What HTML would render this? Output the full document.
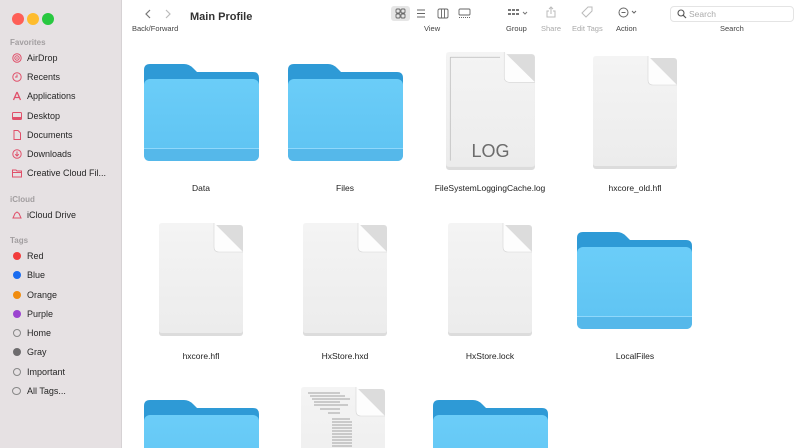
<!DOCTYPE html>
<html style="width:800px;height:448px;overflow:hidden"><head><meta charset="utf-8"><style>
*{margin:0;padding:0;box-sizing:border-box}
body{width:800px;height:448px;overflow:hidden;background:#fff;font-family:"Liberation Sans",sans-serif;position:relative}
#side{position:absolute;left:0;top:0;width:122px;height:448px;background:#e6e1e3;border-right:1px solid #d6d2d4}
.dot{position:absolute;top:13px;width:12px;height:12px;border-radius:50%}
.sh{position:absolute;left:10px;font-size:8px;color:#a29ea0;font-weight:bold}
.si{position:absolute;left:27px;font-size:9px;color:#262626}
.ic{position:absolute;left:12px;width:10px;height:10px}
.tg{position:absolute;left:13px;width:8px;height:8px;border-radius:50%}
.a{position:absolute}
.lbl{position:absolute;font-size:8.5px;color:#222;text-align:center;width:160px}
.tb{position:absolute;font-size:7.5px;color:#444;text-align:center}
</style></head><body>
<div id="side">
<div class="dot" style="left:12px;background:#fe5f57"></div>
<div class="dot" style="left:27px;background:#febc2e"></div>
<div class="dot" style="left:42px;background:#28c840"></div>
<div class="sh" style="top:38px">Favorites</div>
<svg class="ic" style="top:53px" viewBox="0 0 10 10"><circle cx="5" cy="5" r="4.2" fill="none" stroke="#e0506a" stroke-width="1"/><circle cx="5" cy="5" r="2.2" fill="none" stroke="#e0506a" stroke-width="1"/><circle cx="5" cy="5" r=".8" fill="#e0506a"/></svg><div class="si" style="top:53px">AirDrop</div>
<svg class="ic" style="top:72px" viewBox="0 0 10 10"><circle cx="5" cy="5" r="4.2" fill="none" stroke="#e0506a"/><path d="M5 2.5V5H3" fill="none" stroke="#e0506a"/></svg><div class="si" style="top:72px">Recents</div>
<svg class="ic" style="top:91px" viewBox="0 0 10 10"><path d="M5 1L1.5 9M5 1L8.5 9M2 6.5H8" fill="none" stroke="#e0506a" stroke-width="1.3"/></svg><div class="si" style="top:91px">Applications</div>
<svg class="ic" style="top:111px" viewBox="0 0 10 10"><rect x=".5" y="1.5" width="9" height="7" rx="1" fill="none" stroke="#e0506a"/><rect x="1" y="6" width="8" height="2" fill="#e0506a"/></svg><div class="si" style="top:111px">Desktop</div>
<svg class="ic" style="top:130px" viewBox="0 0 10 10"><path d="M2 .5H6L8.5 3V9.5H2Z" fill="none" stroke="#e0506a"/></svg><div class="si" style="top:130px">Documents</div>
<svg class="ic" style="top:149px" viewBox="0 0 10 10"><circle cx="5" cy="5" r="4.2" fill="none" stroke="#e0506a"/><path d="M5 2.5V7M3.2 5.3L5 7L6.8 5.3" fill="none" stroke="#e0506a"/></svg><div class="si" style="top:149px">Downloads</div>
<svg class="ic" style="top:168px" viewBox="0 0 10 10"><path d="M.5 2H4L5 3H9.5V9H.5Z M.5 4.5H9.5" fill="none" stroke="#e0506a"/></svg><div class="si" style="top:168px">Creative Cloud Fil...</div>
<div class="sh" style="top:195px">iCloud</div>
<svg class="ic" style="top:210px" viewBox="0 0 10 10"><path d="M1 8H9L7 3.5L5 2L3 3.5Z" fill="none" stroke="#e0506a"/></svg><div class="si" style="top:210px">iCloud Drive</div>
<div class="sh" style="top:236px">Tags</div>
<div class="tg" style="top:252px;background:#f23c3c"></div><div class="si" style="top:251px">Red</div>
<div class="tg" style="top:271px;background:#1a6cf0"></div><div class="si" style="top:270px">Blue</div>
<div class="tg" style="top:291px;background:#f08c10"></div><div class="si" style="top:290px">Orange</div>
<div class="tg" style="top:310px;background:#9c44d0"></div><div class="si" style="top:309px">Purple</div>
<div class="tg" style="top:329px;border:1px solid #888"></div><div class="si" style="top:328px">Home</div>
<div class="tg" style="top:348px;background:#6e6c6e"></div><div class="si" style="top:347px">Gray</div>
<div class="tg" style="top:368px;border:1px solid #888"></div><div class="si" style="top:367px">Important</div>
<div class="tg" style="top:387px;border:1px solid #888;width:9px;left:12px"></div><div class="si" style="top:386px">All Tags...</div>
</div>
<svg class="a" style="left:144px;top:9px" width="30" height="10" viewBox="0 0 30 10"><path d="M6 1L2 5L6 9" fill="none" stroke="#777" stroke-width="1.2"/><path d="M22 1L26 5L22 9" fill="none" stroke="#bbb" stroke-width="1.2"/></svg>
<div class="tb" style="left:132px;top:24px">Back/Forward</div>
<div class="a" style="left:190px;top:11px;font-size:11px;font-weight:bold;color:#333">Main Profile</div>
<div class="a" style="left:391px;top:6px;width:19px;height:15px;background:#e6e6e6;border-radius:3px"></div>
<svg class="a" style="left:395px;top:8px" width="90" height="11" viewBox="0 0 90 11"><g fill="none" stroke="#666" stroke-width=".9"><rect x="1" y="1" width="4" height="4" rx="1"/><rect x="6" y="1" width="4" height="4" rx="1"/><rect x="1" y="6" width="4" height="4" rx="1"/><rect x="6" y="6" width="4" height="4" rx="1"/><path d="M22 2H30M22 5.5H30M22 9H30"/><rect x="43" y="1" width="10" height="9" rx="1.5"/><path d="M46.5 1V10M49.5 1V10"/><rect x="64" y="1" width="11" height="6" rx="1"/><path d="M64 9.5H75" stroke-dasharray="1 1"/></g></svg>
<div class="tb" style="left:424px;top:24px">View</div>
<svg class="a" style="left:507px;top:8px" width="24" height="11" viewBox="0 0 24 11"><g fill="#777"><rect x="1" y="1" width="3" height="2"/><rect x="5" y="1" width="3" height="2"/><rect x="9" y="1" width="3" height="2"/><rect x="1" y="5" width="3" height="2"/><rect x="5" y="5" width="3" height="2"/><rect x="9" y="5" width="3" height="2"/></g><path d="M16 4L18 6L20 4" fill="none" stroke="#777"/></svg>
<div class="tb" style="left:506px;top:24px">Group</div>
<svg class="a" style="left:546px;top:6px" width="10" height="12" viewBox="0 0 10 12"><path d="M3 5H1V11H9V5H7M5 1V8M3 3L5 1L7 3" fill="none" stroke="#bbb"/></svg>
<div class="tb" style="left:541px;top:24px;color:#aaa">Share</div>
<svg class="a" style="left:581px;top:6px" width="12" height="12" viewBox="0 0 12 12"><path d="M7 1H11V5L5 11L1 7Z" fill="none" stroke="#bbb"/></svg>
<div class="tb" style="left:572px;top:24px;color:#aaa">Edit Tags</div>
<svg class="a" style="left:618px;top:7px" width="22" height="11" viewBox="0 0 22 11"><circle cx="5.5" cy="5.5" r="4.5" fill="none" stroke="#666"/><path d="M3.5 5.5H7.5" stroke="#666"/><path d="M14 4L16 6L18 4" fill="none" stroke="#666"/></svg>
<div class="tb" style="left:616px;top:24px">Action</div>
<div class="a" style="left:670px;top:6px;width:124px;height:16px;border:1px solid #e4e4e4;border-radius:4px;background:#fff"></div>
<svg class="a" style="left:677px;top:9px" width="10" height="10" viewBox="0 0 10 10"><circle cx="4" cy="4" r="3" fill="none" stroke="#555" stroke-width="1.1"/><path d="M6.2 6.2L9 9" stroke="#555" stroke-width="1.2"/></svg>
<div class="a" style="left:689px;top:9px;font-size:8.5px;color:#aaa">Search</div>
<div class="tb" style="left:720px;top:24px">Search</div>

<svg width="0" height="0" style="position:absolute"><defs>
<linearGradient id="fb" x1="0" y1="0" x2="0" y2="1"><stop offset="0" stop-color="#6bcdf8"/><stop offset="1" stop-color="#5ec3f2"/></linearGradient>
<linearGradient id="pg" x1="0" y1="0" x2="0" y2="1"><stop offset="0" stop-color="#f4f4f4"/><stop offset="1" stop-color="#ececec"/></linearGradient>
<symbol id="fold" viewBox="0 0 115 97"><path d="M0 6Q0 0 6 0H40Q45 0 49 4L53 8H109Q115 8 115 14V50H0Z" fill="#2e9ad6"/><rect x="0" y="15" width="115" height="82" rx="6" fill="url(#fb)"/><rect x="0" y="84" width="115" height="1" fill="#8fd8fb"/><path d="M0 85H115V91Q115 97 109 97H6Q0 97 0 91Z" fill="#55b8ea"/></symbol>
<symbol id="doc" viewBox="0 0 86 113"><rect x="1" y="2" width="84" height="111" rx="3" fill="#dcdcdc"/><path d="M4 0H56L85 29V107Q85 110 82 110H4Q1 110 1 107V3Q1 0 4 0Z" fill="url(#pg)"/><path d="M56 0V24Q56 29 61 29H85Z" fill="#fdfdfd"/><path d="M56 0V24Q56 29 61 29H85" fill="none" stroke="#d6d6d6" stroke-width=".6"/></symbol>
</defs></svg>

<svg class="a" style="left:144px;top:64px" width="115" height="97"><use href="#fold"/></svg>
<svg class="a" style="left:288px;top:64px" width="115" height="97"><use href="#fold"/></svg>
<svg class="a" style="left:445px;top:52px" width="91" height="118" viewBox="0 0 86 113" preserveAspectRatio="none"><use href="#doc" width="86" height="113"/><path d="M5 5V104M5 5H52" stroke="#bbb" stroke-width=".7"/></svg>
<div class="a" style="left:445px;top:141px;width:91px;text-align:center;font-size:18px;color:#6c6c6c">LOG</div>
<svg class="a" style="left:592px;top:56px" width="86" height="113"><use href="#doc"/></svg>

<svg class="a" style="left:158px;top:223px" width="86" height="113"><use href="#doc"/></svg>
<svg class="a" style="left:302px;top:223px" width="86" height="113"><use href="#doc"/></svg>
<svg class="a" style="left:447px;top:223px" width="86" height="113"><use href="#doc"/></svg>
<svg class="a" style="left:577px;top:232px" width="115" height="97"><use href="#fold"/></svg>

<svg class="a" style="left:144px;top:400px" width="115" height="48"><use href="#fold" width="115" height="97"/></svg>
<svg class="a" style="left:300px;top:387px" width="90" height="61"><use href="#doc" width="86" height="113"/><g stroke="#888" stroke-width=".7"><path d="M8 6H40M10 9H45M12 12H50M14 15H40M14 18H48M20 22H40M28 26H40"/><path d="M32 32H50M32 35H52M32 38H52M32 41H52M32 44H52M32 47H52M32 50H52M32 53H52M32 56H52M32 59H52"/></g></svg>
<svg class="a" style="left:433px;top:400px" width="115" height="48"><use href="#fold" width="115" height="97"/></svg>

<div class="lbl" style="left:121px;top:183px">Data</div>
<div class="lbl" style="left:265px;top:183px">Files</div>
<div class="lbl" style="left:410px;top:183px">FileSystemLoggingCache.log</div>
<div class="lbl" style="left:555px;top:183px">hxcore_old.hfl</div>
<div class="lbl" style="left:121px;top:351px">hxcore.hfl</div>
<div class="lbl" style="left:265px;top:351px">HxStore.hxd</div>
<div class="lbl" style="left:410px;top:351px">HxStore.lock</div>
<div class="lbl" style="left:555px;top:351px">LocalFiles</div>
</body></html>
